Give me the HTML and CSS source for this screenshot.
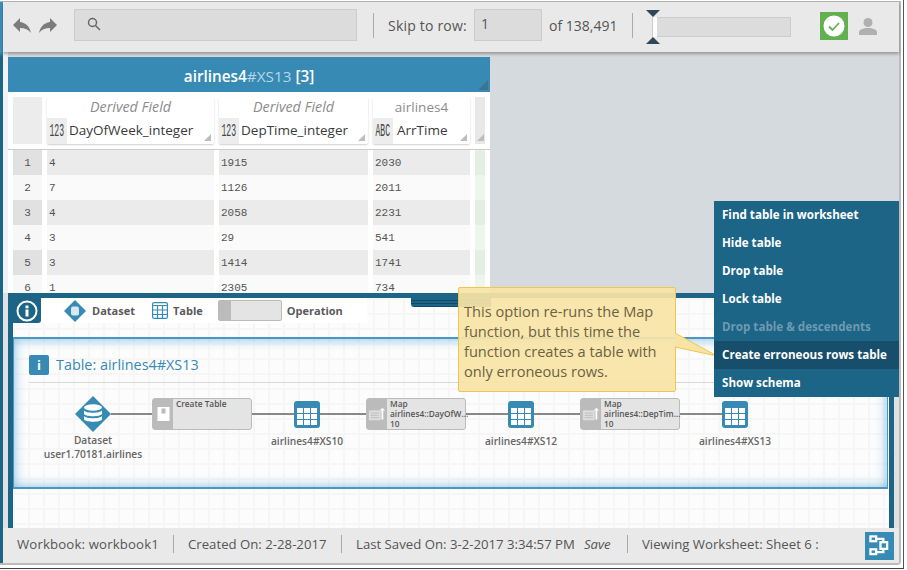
FILE: index.html
```html
<!DOCTYPE html>
<html lang="en">
<head>
    <meta charset="UTF-8">
    <meta name="viewport" content="width=device-width, initial-scale=1.0">
    <title>Workbook</title>
    <link rel="stylesheet" href="styles.css">
</head>
<body>
    <div class="window">
        <div class="app">
            <div class="sidebar"></div>
            <div class="content">

                <div class="toolbar">
                    <svg class="arrow-icon" viewBox="0 0 24 24"><path d="M10 9V5l-7 7 7 7v-4.100c5 0 8.500 1.600 11 5.100-1-5-4-10-11-11z"/></svg>
                    <svg class="arrow-icon flip" viewBox="0 0 24 24"><path d="M10 9V5l-7 7 7 7v-4.100c5 0 8.500 1.600 11 5.100-1-5-4-10-11-11z"/></svg>
                    <div class="search-box">
                        <svg class="search-icon" viewBox="0 0 14 14"><circle cx="5.500" cy="5.500" r="4"/><path d="M8.500 8.500l4.500 4.500"/></svg>
                    </div>
                    <span class="tool-divider"></span>
                    <span class="skip-label">Skip to row:</span>
                    <div class="row-input">1</div>
                    <span class="row-count">of 138,491</span>
                    <span class="tool-divider second"></span>
                    <div class="slider">
                        <span class="slider-top"></span>
                        <span class="slider-handle"></span>
                        <span class="slider-bottom"></span>
                    </div>
                    <div class="status-ok">
                        <svg viewBox="0 0 28 28"><circle cx="14" cy="14" r="10.500" fill="#fff"/><path d="M9 14.500l3.500 3.500 6.500-7" fill="none" stroke="#62b04f" stroke-width="1.800"/></svg>
                    </div>
                    <svg class="user-icon" viewBox="0 0 18 18"><circle cx="9" cy="5.500" r="4.500"/><path d="M0 18v-2.500c0-3 4-4.500 9-4.500s9 1.500 9 4.500V18z"/></svg>
                </div>

                <div class="worksheet">
                    <div class="table-panel">
                        <div class="table-title">
                            <span class="title-name">airlines4</span><span class="title-id">#XS13</span> <span class="title-count">[3]</span>
                            <span class="corner-dark"></span>
                        </div>
                        <div class="table-head">
                            <div class="blank-head"></div>
                            <div class="col-head col-a">
                                <div class="col-source derived">Derived Field</div>
                                <div class="col-name"><span class="type-box"><span class="type-text">123</span></span><span class="col-text">DayOfWeek_integer</span><span class="corner"></span></div>
                            </div>
                            <div class="col-head col-b">
                                <div class="col-source derived">Derived Field</div>
                                <div class="col-name"><span class="type-box"><span class="type-text">123</span></span><span class="col-text">DepTime_integer</span><span class="corner"></span></div>
                            </div>
                            <div class="col-head col-c">
                                <div class="col-source">airlines4</div>
                                <div class="col-name"><span class="type-box"><span class="type-text">ABC</span></span><span class="col-text">ArrTime</span><span class="corner"></span></div>
                            </div>
                            <div class="scroll-head"><span class="corner"></span></div>
                        </div>
                        <div class="row odd"><span class="num">1</span><span class="cell col-a">4</span><span class="cell col-b">1915</span><span class="cell col-c">2030</span><span class="mark"></span></div>
                        <div class="row"><span class="num">2</span><span class="cell col-a">7</span><span class="cell col-b">1126</span><span class="cell col-c">2011</span><span class="mark"></span></div>
                        <div class="row odd"><span class="num">3</span><span class="cell col-a">4</span><span class="cell col-b">2058</span><span class="cell col-c">2231</span><span class="mark"></span></div>
                        <div class="row"><span class="num">4</span><span class="cell col-a">3</span><span class="cell col-b">29</span><span class="cell col-c">541</span><span class="mark"></span></div>
                        <div class="row odd"><span class="num">5</span><span class="cell col-a">3</span><span class="cell col-b">1414</span><span class="cell col-c">1741</span><span class="mark"></span></div>
                        <div class="row"><span class="num">6</span><span class="cell col-a">1</span><span class="cell col-b">2305</span><span class="cell col-c">734</span><span class="mark"></span></div>
                    </div>
                </div>

                <div class="dag-panel">
                    <div class="legend">
                        <div class="info-tab">
                            <svg viewBox="0 0 22 22"><circle cx="11" cy="11" r="9.500" fill="none" stroke="#fff" stroke-width="2"/><rect x="9.500" y="9.500" width="3" height="7" fill="#fff"/><rect x="9.500" y="5.500" width="3" height="2.800" fill="#fff"/></svg>
                        </div>
                        <svg class="legend-diamond" viewBox="0 0 22 22"><path d="M11 0l11 11-11 11L0 11z" fill="#378ab3"/><rect x="7" y="6.500" width="8" height="9" rx="2" fill="#d9e8f0"/></svg>
                        <span class="legend-label label-dataset">Dataset</span>
                        <svg class="legend-table" viewBox="0 0 16 17"><rect x=".6" y=".6" width="14.800" height="15.800" rx="1.500" fill="#fff" stroke="#378ab3" stroke-width="1.200"/><path d="M0 3.500h16M0 8h16M0 12.500h16M5.500 3v14M10.500 3v14" stroke="#378ab3" stroke-width="1.200" fill="none"/></svg>
                        <span class="legend-label label-table">Table</span>
                        <div class="legend-op"><span class="op-side"></span></div>
                        <span class="legend-label">Operation</span>
                    </div>
                    <div class="drag-tab"></div>

                    <div class="dag-frame">
                        <div class="frame-title">
                            <span class="frame-i">i</span>
                            <span class="frame-name">Table: airlines4#XS13</span>
                        </div>
                        <div class="dag-row">
                            <div class="node-dataset">
                                <svg viewBox="0 0 36 36"><path d="M18 0l18 18-18 18L0 18z" fill="#378ab3"/><ellipse cx="18" cy="11.500" rx="9" ry="3.200" fill="#fff"/><path d="M9 14.500c2 3 16 3 18 0v3.500c-2 3-16 3-18 0zM9 20c2 3 16 3 18 0v3.500c-2 3-16 3-18 0z" fill="#fff"/></svg>
                                <div class="node-label">Dataset<br>user1.70181.airlines</div>
                            </div>
                            <span class="link link-a"></span>
                            <div class="node-op">
                                <div class="op-icon">
                                    <svg viewBox="0 0 12 14"><rect width="12" height="14" fill="#fff"/><rect x="4" y="1.500" width="4" height="5" fill="#bbb"/></svg>
                                </div>
                                <div class="op-text">Create Table</div>
                            </div>
                            <span class="link"></span>
                            <div class="node-table">
                                <svg viewBox="0 0 26 27"><rect width="26" height="27" rx="3" fill="#378ab3"/><path d="M3 7h6v5H3zM10 7h6v5h-6zM17 7h6v5h-6zM3 13h6v5H3zM10 13h6v5h-6zM17 13h6v5h-6zM3 19h6v5H3zM10 19h6v5h-6zM17 19h6v5h-6z" fill="#fff"/></svg>
                                <div class="node-label">airlines4#XS10</div>
                            </div>
                            <span class="link link-c"></span>
                            <div class="node-op">
                                <div class="op-icon">
                                    <svg class="map-icon" viewBox="0 0 20 14"><path d="M1 3h13v11H1z" fill="#ddd"/><path d="M3 6h9M3 8.500h9M3 11h9" stroke="#bbb"/><path d="M15 13V3h-2l3-3 3 3h-2v10z" fill="#fff"/></svg>
                                </div>
                                <div class="op-text">Map<br>airlines4::DayOfW...<br>10</div>
                            </div>
                            <span class="link"></span>
                            <div class="node-table">
                                <svg viewBox="0 0 26 27"><rect width="26" height="27" rx="3" fill="#378ab3"/><path d="M3 7h6v5H3zM10 7h6v5h-6zM17 7h6v5h-6zM3 13h6v5H3zM10 13h6v5h-6zM17 13h6v5h-6zM3 19h6v5H3zM10 19h6v5h-6zM17 19h6v5h-6z" fill="#fff"/></svg>
                                <div class="node-label">airlines4#XS12</div>
                            </div>
                            <span class="link link-e"></span>
                            <div class="node-op">
                                <div class="op-icon">
                                    <svg class="map-icon" viewBox="0 0 20 14"><path d="M1 3h13v11H1z" fill="#ddd"/><path d="M3 6h9M3 8.500h9M3 11h9" stroke="#bbb"/><path d="M15 13V3h-2l3-3 3 3h-2v10z" fill="#fff"/></svg>
                                </div>
                                <div class="op-text">Map<br>airlines4::DepTim...<br>10</div>
                            </div>
                            <span class="link"></span>
                            <div class="node-table">
                                <svg viewBox="0 0 26 27"><rect width="26" height="27" rx="3" fill="#378ab3"/><path d="M3 7h6v5H3zM10 7h6v5h-6zM17 7h6v5h-6zM3 13h6v5H3zM10 13h6v5h-6zM17 13h6v5h-6zM3 19h6v5H3zM10 19h6v5h-6zM17 19h6v5h-6z" fill="#fff"/></svg>
                                <div class="node-label">airlines4#XS13</div>
                            </div>
                        </div>
                    </div>
                </div>

                <div class="statusbar">
                    <span class="stat stat-book">Workbook: workbook1</span>
                    <span class="stat stat-created">Created On: 2-28-2017</span>
                    <span class="stat stat-saved">Last Saved On: 3-2-2017 3:34:57 PM<em class="save">Save</em></span>
                    <span class="stat sheet">Viewing Worksheet: Sheet 6 :</span>
                    <div class="dag-toggle">
                        <svg viewBox="0 0 22 22" fill="none" stroke="#fff" stroke-width="2.400"><rect x="1.500" y="1.500" width="6" height="5"/><rect x="12" y="7.500" width="7" height="7"/><rect x="1.500" y="15" width="6" height="5"/><path d="M8 4h7v3M8 18h7v-3"/></svg>
                    </div>
                </div>
            </div>
        </div>

        <ul class="menu">
            <li>Find table in worksheet</li>
            <li>Hide table</li>
            <li>Drop table</li>
            <li>Lock table</li>
            <li class="disabled">Drop table &amp; descendents</li>
            <li class="active">Create erroneous rows table</li>
            <li>Show schema</li>
        </ul>

        <div class="callout">
            This option re-runs the Map function, but this time the function creates a table with only erroneous rows.
            <svg class="callout-tail" viewBox="0 0 44 26"><path d="M0 1l42 23L0 15" fill="#f7e4a5" stroke="#efc650"/></svg>
        </div>
    </div>
</body>
</html>
```

FILE: styles.css
```css
* {
    box-sizing: border-box;
}
body {
    margin: 0;
    background: #fff;
    font-family: "Open Sans", sans-serif;
    color: #555;
}
.window {
    position: relative;
    width: 904px;
    height: 569px;
    padding-top: 1px;
    border-right: 1px solid #555;
    border-bottom: 1px solid #444;
    overflow: hidden;
}
.app {
    display: flex;
    width: 901px;
    height: 564px;
    border-top: 1px solid #b4b4b4;
    border-right: 2px solid #bbb;
    border-bottom: 2px solid #bbb;
    border-bottom-right-radius: 4px;
}
.sidebar {
    width: 3px;
    background: linear-gradient(#3a90bd 0, #3a90bd 50px, #1d6587 55px);
}
.content {
    display: flex;
    flex-direction: column;
    width: 896px;
    background: #dfe2e5;
}

/* toolbar */
.toolbar {
    position: relative;
    z-index: 2;
    display: flex;
    align-items: center;
    flex: none;
    height: 50px;
    padding-bottom: 4px;
    background: #e9e9e9;
    box-shadow: 0 2px 3px rgba(0, 0, 0, 0.3);
    font-size: 14px;
}
.arrow-icon {
    width: 24px;
    height: 24px;
    margin-left: 7px;
    fill: #7c7c7c;
}
.arrow-icon.flip {
    margin-left: 2px;
    transform: scaleX(-1);
}
.search-box {
    width: 283px;
    height: 32px;
    margin-left: 14px;
    padding: 7px 12px;
    background: #dcdcdc;
    border: 1px solid #ccc;
}
.search-icon {
    display: block;
    width: 14px;
    height: 14px;
    fill: none;
    stroke: #666;
    stroke-width: 1.500;
}
.tool-divider {
    width: 1px;
    height: 25px;
    margin-left: 16px;
    background: #aaa;
}
.skip-label {
    margin-left: 14px;
    width: 86px;
    letter-spacing: 0.2px;
}
.row-input {
    width: 68px;
    height: 32px;
    padding: 4px 6px;
    background: #dcdcdc;
    border: 1px solid #ccc;
}
.row-count {
    margin-left: 7px;
    width: 83px;
}
.tool-divider.second {
    margin-left: 0;
}
.slider {
    position: relative;
    width: 139px;
    height: 20px;
    margin-top: 4px;
    margin-left: 19px;
    background: #dcdcdc;
    border: 1px solid #ccc;
}
.slider-handle {
    position: absolute;
    left: 0;
    top: -1px;
    width: 4px;
    height: 20px;
    background: #fff;
}
.slider-top,
.slider-bottom {
    position: absolute;
    left: -7px;
    width: 0;
    height: 0;
    border-left: 7px solid transparent;
    border-right: 7px solid transparent;
}
.slider-top {
    top: -8px;
    border-top: 7px solid #2f4858;
}
.slider-bottom {
    bottom: -8px;
    border-bottom: 7px solid #2f4858;
}
.status-ok {
    width: 28px;
    height: 28px;
    margin-top: 2px;
    margin-left: 29px;
    background: #62b04f;
}
.status-ok svg {
    display: block;
}
.user-icon {
    width: 18px;
    height: 18px;
    margin-top: 2px;
    margin-left: 11px;
    fill: #b0b0b0;
}

/* worksheet */
.worksheet {
    flex: none;
    height: 241px;
    padding: 5px 0 0 5px;
    background: linear-gradient(90deg, #f1f2f3 5px, #d5dade 5px);
    overflow: hidden;
}
.table-panel {
    width: 482px;
    height: 240px;
    background: #fff;
}
.table-title {
    position: relative;
    height: 35px;
    background: #378ab3;
    color: #fff;
    font-size: 15.300px;
    line-height: 38px;
    text-align: center;
}
.title-name,
.title-count {
    font-weight: 600;
}
.title-id {
    color: #b9d7e6;
}
.corner-dark {
    position: absolute;
    right: 2px;
    bottom: 2px;
    width: 0;
    height: 0;
    border-left: 10px solid transparent;
    border-bottom: 10px solid #3c7593;
}
.table-head {
    display: flex;
    gap: 5px;
    height: 58px;
    padding: 5px 5px 0;
    border-bottom: 1px solid #ccc;
}
.blank-head {
    width: 29px;
    height: 47px;
    background: #ececec;
}
.col-a {
    width: 167px;
}
.col-b {
    width: 149px;
}
.col-c {
    width: 97px;
}
.col-head {
    height: 47px;
    background: #fff;
    border-radius: 2px;
    box-shadow: 0 1px 2px rgba(0, 0, 0, 0.2);
}
.col-source {
    height: 21px;
    font-size: 13.500px;
    line-height: 20px;
    text-align: center;
    color: #8c8c8c;
}
.col-source.derived {
    font-size: 14.300px;
    font-style: italic;
}
.col-name {
    position: relative;
    display: flex;
    align-items: center;
    height: 26px;
    font-size: 13.500px;
    color: #3a3a3a;
}
.col-text {
    margin-top: -2px;
}
.type-box {
    display: flex;
    align-items: center;
    justify-content: center;
    flex: none;
    width: 20px;
    height: 26px;
    margin-right: 2px;
    background: #ededed;
}
.col-c .type-box {
    margin-right: 4px;
}
.type-text {
    font-family: "Liberation Mono", monospace;
    font-size: 12px;
    color: #444;
    transform: scale(0.68, 1.6);
}
.corner {
    position: absolute;
    right: 3px;
    bottom: 3px;
    width: 0;
    height: 0;
    border-left: 7px solid transparent;
    border-bottom: 7px solid #bdbdbd;
}
.scroll-head {
    position: relative;
    width: 10px;
    height: 47px;
    background: #e8e8e8;
}
.scroll-head .corner {
    right: 1px;
}
.row {
    display: flex;
    gap: 5px;
    height: 25px;
    padding: 0 5px;
    font-family: "Liberation Mono", monospace;
    font-size: 11px;
    line-height: 26px;
    color: #555;
}
.num {
    width: 29px;
    text-align: center;
    background: #f7f7f7;
}
.cell {
    padding-left: 2px;
    background: #fafafa;
}
.mark {
    width: 10px;
    background: #edf6ec;
}
.row.odd .num {
    background: #e1e1e1;
}
.row.odd .cell {
    background: #ebebeb;
}
.row.odd .mark {
    background: #e4efe3;
}

/* dag panel */
.dag-panel {
    position: relative;
    z-index: 1;
    flex: none;
    width: 886px;
    height: 235px;
    margin-left: 5px;
    border: solid #1d6587;
    border-width: 5px 5px 0;
    background-color: #fcfcfc;
    background-image:
        linear-gradient(#f6f6f6 2px, transparent 2px),
        linear-gradient(90deg, #f6f6f6 2px, transparent 2px);
    background-size: 15px 15px;
}
.legend {
    display: flex;
    align-items: center;
    width: 354px;
    height: 25px;
    background: #fff;
}
.info-tab {
    display: flex;
    align-items: center;
    justify-content: center;
    width: 28px;
    height: 25px;
    background: #1d6587;
    border-bottom-right-radius: 3px;
}
.info-tab svg {
    width: 22px;
    height: 22px;
}
.legend-label {
    font-size: 11px;
    font-weight: 700;
    color: #5a5a5a;
}
.legend-diamond {
    width: 22px;
    height: 22px;
    margin-left: 23px;
}
.label-dataset {
    margin-left: 6px;
}
.legend-table {
    width: 16px;
    height: 17px;
    margin-left: 17px;
}
.label-table {
    margin-left: 5px;
}
.legend-op {
    width: 64px;
    height: 21px;
    margin-left: 15px;
    margin-right: 5px;
    background: #e4e4e4;
    border: 1px solid #bbb;
    border-radius: 2px;
}
.op-side {
    display: block;
    width: 12px;
    height: 100%;
    background: #bbb;
}
.drag-tab {
    position: absolute;
    top: 0;
    left: 398px;
    width: 80px;
    height: 9px;
    background: repeating-linear-gradient(#1d6587 0, #1d6587 2px, #0f4b69 2px, #0f4b69 3px);
    border-bottom-left-radius: 3px;
}
.dag-frame {
    position: relative;
    height: 152px;
    margin-top: 14px;
    margin-right: 1px;
    border: solid #4a97c4;
    border-width: 2px 1px;
    box-shadow: inset 0 0 12px #7fbce0;
}
.frame-title {
    display: flex;
    align-items: center;
    gap: 7px;
    height: 44px;
    margin: 0 8px 0 15px;
    padding-top: 8px;
    border-bottom: 1px solid #d8d8d8;
}
.frame-i {
    width: 20px;
    height: 20px;
    background: #378ab3;
    border-radius: 2px;
    color: #fff;
    font-size: 13px;
    font-weight: 700;
    line-height: 20px;
    text-align: center;
}
.frame-name {
    font-size: 14.400px;
    color: #378ab3;
}
.dag-row {
    display: flex;
    align-items: center;
    height: 36px;
    margin-top: 13px;
    margin-left: 61px;
}
.link {
    width: 42px;
    height: 2px;
    background: #888;
}
.link-a {
    width: 41px;
}
.link-c,
.link-e {
    width: 46px;
}
.node-dataset,
.node-table {
    position: relative;
    flex: none;
}
.node-dataset {
    width: 36px;
    height: 36px;
}
.node-table {
    width: 26px;
    height: 27px;
}
.node-dataset svg,
.node-table svg {
    display: block;
}
.node-label {
    position: absolute;
    left: 50%;
    top: 100%;
    margin-top: 1px;
    transform: translateX(-50%);
    font-size: 10.200px;
    font-weight: 600;
    line-height: 14px;
    color: #666;
    text-align: center;
    white-space: nowrap;
}
.node-table .node-label {
    margin-top: 6px;
}
.node-op {
    display: flex;
    flex: none;
    width: 100px;
    height: 32px;
    background: #e4e4e4;
    border: 1px solid #bbb;
    border-radius: 3px;
}
.op-icon {
    display: flex;
    align-items: center;
    justify-content: center;
    flex: none;
    width: 20px;
    background: #bbb;
}
.op-icon svg {
    width: 13px;
    height: 14px;
}
.op-icon .map-icon {
    width: 18px;
}
.op-text {
    padding: 0 0 0 3px;
    font-size: 8.300px;
    font-weight: 600;
    line-height: 10px;
    color: #555;
    white-space: nowrap;
}

/* status bar */
.statusbar {
    position: relative;
    z-index: 2;
    display: flex;
    align-items: center;
    flex: 1;
    padding-left: 14px;
    padding-right: 5px;
    background: #e9e9e9;
    font-size: 13.200px;
    color: #555;
}
.stat {
    flex: none;
    margin-right: 14px;
    margin-bottom: 3px;
    border-right: 1px solid #aaa;
    line-height: 18px;
    white-space: nowrap;
}
.stat-book {
    width: 157px;
    letter-spacing: 0.15px;
}
.stat-created {
    width: 154px;
}
.stat-saved {
    width: 272px;
}
.save {
    margin-left: 9px;
}
.sheet {
    width: 183px;
    overflow: hidden;
    border-right: 0;
    margin-right: 0;
}
.dag-toggle {
    display: flex;
    align-items: center;
    justify-content: center;
    width: 29px;
    height: 28px;
    margin-left: auto;
    background: #378ab3;
}
.dag-toggle svg {
    width: 21px;
    height: 21px;
}

/* floating menu and tooltip */
.menu {
    position: absolute;
    left: 714px;
    top: 201px;
    width: 185px;
    margin: 0;
    padding: 0;
    list-style: none;
    background: #1d6587;
    color: #fff;
    font-size: 11.600px;
    font-weight: 700;
    z-index: 4;
}
.menu li {
    height: 28px;
    padding-left: 8px;
    line-height: 28px;
}
.menu .disabled {
    color: #6d9ab1;
}
.menu .active {
    background: #164e6b;
}
.callout {
    position: absolute;
    left: 458px;
    top: 287px;
    width: 218px;
    height: 105px;
    padding: 13px 5px 0;
    background: rgba(248, 228, 165, 0.92);
    border: 1px solid #efc650;
    border-radius: 2px;
    color: #6b6244;
    font-size: 14.600px;
    line-height: 20px;
    z-index: 3;
}
.callout-tail {
    position: absolute;
    left: 216px;
    top: 44px;
    width: 44px;
    height: 26px;
    z-index: 5;
}
```
